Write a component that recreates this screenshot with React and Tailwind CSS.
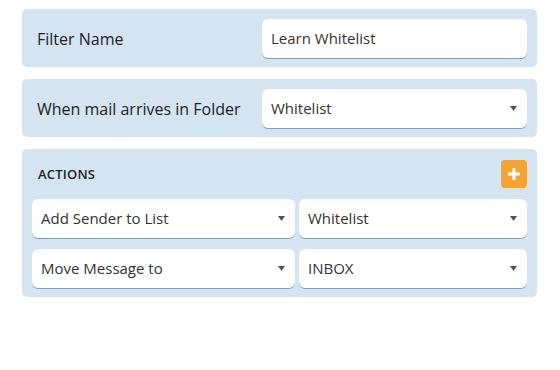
import React from "react";

const Caret = () => (
  <svg width="7" height="5" viewBox="0 0 7 5" className="shrink-0">
    <path d="M0 0h7L3.5 5z" fill="#555" />
  </svg>
);

const Select = ({ value, className = "" }) => (
  <div
    className={`h-[39px] bg-white rounded-[6px] shadow-[0_1px_0_#7ea2b6] flex items-center justify-between pl-[9px] pr-[10px] text-[15px] text-[#333] ${className}`}
  >
    <span>{value}</span>
    <Caret />
  </div>
);

export default function App() {
  return (
    <div
      className="w-[560px] h-[370px] bg-white pt-[9px] pl-[22px] pr-[23px] flex flex-col gap-[12px]"
      style={{ fontFamily: '"Open Sans", sans-serif' }}
    >
      <div className="bg-[#d4e5f1] rounded-[5px] pt-[10px] pb-[9px] pr-[10px] pl-[15px] flex items-center justify-between">
        <span className="text-[16px] text-[#222]">Filter Name</span>
        <div className="w-[265px] h-[39px] bg-white rounded-[6px] shadow-[0_1px_0_#7ea2b6] flex items-center pl-[9px] text-[15px] text-[#333]">
          Learn Whitelist
        </div>
      </div>

      <div className="bg-[#d4e5f1] rounded-[5px] pt-[10px] pb-[9px] pr-[10px] pl-[15px] flex items-center justify-between">
        <span className="text-[16px] text-[#222]">When mail arrives in Folder</span>
        <Select value="Whitelist" className="w-[265px]" />
      </div>

      <div className="bg-[#d4e5f1] rounded-[5px] pt-[11px] px-[10px] pb-[9px] flex flex-col">
        <div className="flex items-center justify-between h-[28px] pl-[6px] mb-[11px]">
          <span className="text-[13px] font-semibold text-[#222] tracking-[0.2px] pt-[2px]">ACTIONS</span>
          <button className="w-[26px] h-[28px] bg-[#f4a431] rounded-[4px] flex items-center justify-center">
            <svg width="12" height="12" viewBox="0 0 12 12">
              <path d="M4.5 0h3v4.5H12v3H7.5V12h-3V7.5H0v-3h4.5z" fill="#fff" />
            </svg>
          </button>
        </div>
        <div className="flex flex-col gap-[11px]">
          <div className="flex gap-[4px]">
            <Select value="Add Sender to List" className="w-[263px]" />
            <Select value="Whitelist" className="flex-1" />
          </div>
          <div className="flex gap-[4px]">
            <Select value="Move Message to" className="w-[263px]" />
            <Select value="INBOX" className="flex-1" />
          </div>
        </div>
      </div>
    </div>
  );
}
